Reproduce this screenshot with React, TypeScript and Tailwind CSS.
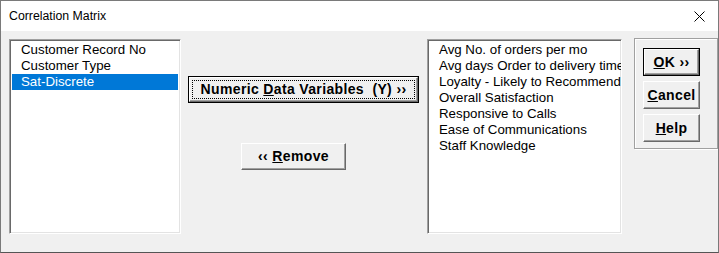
import type { ReactNode } from 'react'

const leftItems = ['Customer Record No', 'Customer Type', 'Sat-Discrete']
const rightItems = [
  'Avg No. of orders per mo',
  'Avg days Order to delivery time',
  'Loyalty - Likely to Recommend',
  'Overall Satisfaction',
  'Responsive to Calls',
  'Ease of Communications',
  'Staff Knowledge',
]

const sunken =
  'border border-t-[#a0a0a0] border-l-[#a0a0a0] border-b-white border-r-white shadow-[inset_1px_1px_0_#696969,inset_-1px_-1px_0_#e3e3e3] bg-white'

function ListBox({ items, selected, width }: { items: string[]; selected?: number; width: string }) {
  return (
    <div className={`${sunken} ${width} h-[195px] overflow-hidden p-[2px]`}>
      {items.map((t, i) => (
        <div
          key={t}
          className={`h-[16px] leading-[16px] pl-[9px] whitespace-nowrap text-[13.3px] ${
            i === selected ? 'bg-[#0078d7] text-white' : 'text-black'
          }`}
        >
          {t}
        </div>
      ))}
    </div>
  )
}

function Btn({
  children,
  isDefault,
  focused,
  className,
}: {
  children: ReactNode
  isDefault?: boolean
  focused?: boolean
  className: string
}) {
  return (
    <div className={`${className} ${isDefault ? 'border border-black' : ''} flex`}>
      <div className="flex-1 flex border border-t-white border-l-white border-b-[#696969] border-r-[#696969] shadow-[inset_-1px_-1px_0_#a0a0a0] bg-[#f0f0f0] p-[2px]">
        <div
          className={`flex-1 flex items-center justify-center font-bold text-[14px] tracking-[0.35px] text-black ${
            focused ? 'border border-dotted border-black' : ''
          }`}
        >
          {children}
        </div>
      </div>
    </div>
  )
}

export default function App() {
  return (
    <div
      className="w-[719px] h-[253px] border border-[#7a7a7a] border-b-[#555] bg-[#f0f0f0] flex flex-col overflow-hidden"
      style={{ fontFamily: '"Liberation Sans", Arial, sans-serif' }}
    >
      <div className="h-[30px] bg-white flex items-center justify-between pl-[8px] pr-[12px] shrink-0">
        <span className="text-[12.3px] text-black">Correlation Matrix</span>
        <svg width="11" height="11" viewBox="0 0 11 11" className="mr-[1px]">
          <path d="M0.5 0.5 L10.5 10.5 M10.5 0.5 L0.5 10.5" stroke="#000" strokeWidth="1" />
        </svg>
      </div>
      <div className="flex pl-[8px] pt-[8px]">
        <ListBox items={leftItems} selected={2} width="w-[172px]" />
        <div className="w-[246px] flex flex-col items-start">
          <Btn isDefault focused className="mt-[37px] ml-[7px] w-[231px] h-[27px]">
            <span>
              Numeric <u>D</u>ata Variables&nbsp; (Y) ››
            </span>
          </Btn>
          <Btn className="mt-[40px] ml-[60px] w-[105px] h-[27px]">
            <span>
              ‹‹ <u>R</u>emove
            </span>
          </Btn>
        </div>
        <ListBox items={rightItems} width="w-[195px]" />
        <div className="ml-[12px] -mt-px w-[84px] h-[111px] shrink-0 border border-[#a0a0a0] shadow-[inset_1px_1px_0_#fff,1px_1px_0_#fff] flex flex-col gap-[5px] pt-[9px] pl-[8px]">
          <Btn isDefault className="w-[57px] h-[28px]">
            <span>
              <u>O</u>K ››
            </span>
          </Btn>
          <Btn className="w-[57px] h-[28px]">
            <span>
              <u>C</u>ancel
            </span>
          </Btn>
          <Btn className="w-[57px] h-[28px]">
            <span>
              <u>H</u>elp
            </span>
          </Btn>
        </div>
      </div>
    </div>
  )
}
